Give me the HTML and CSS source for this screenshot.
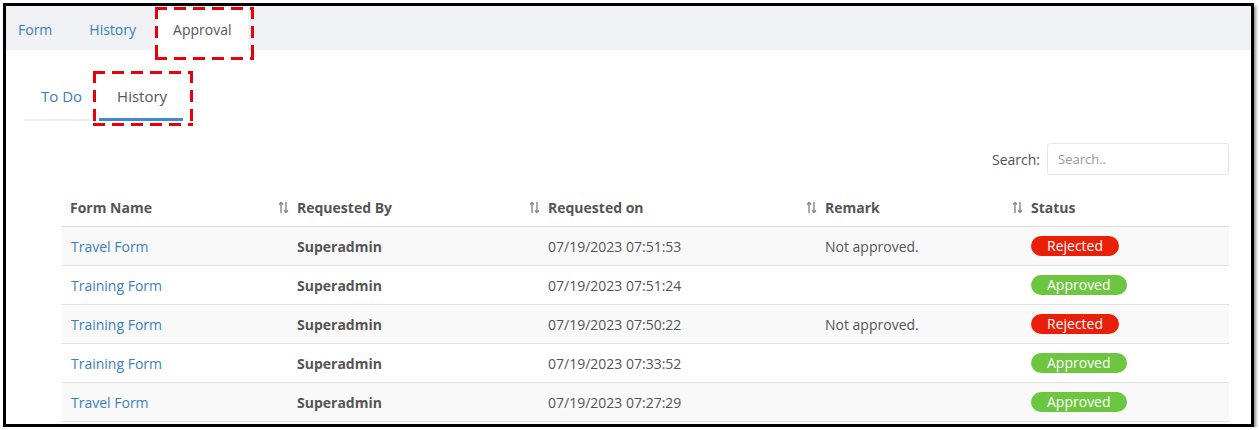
FILE: index.html
```html
<!DOCTYPE html>
<html>
<head>
<meta charset="utf-8">
<link rel="stylesheet" href="styles.css">
</head>
<body>
<div class="frame">
  <nav class="topnav">
    <a class="tab">Form</a>
    <a class="tab">History</a>
    <a class="tab active">Approval</a>
  </nav>
  <div class="content">
    <div class="subtabs">
      <a class="subtab">To Do</a>
      <a class="subtab active">History</a>
    </div>
    <div class="toolbar">
      <label class="search-label">Search:</label>
      <input class="search-input" type="text" placeholder="Search..">
    </div>
    <table class="grid">
      <thead>
        <tr>
          <th class="c1">Form Name</th>
          <th class="c2"><span class="sort"><svg width="11" height="13" viewBox="0 0 11 13"><path d="M3 1.5V12M1 3.5L3 1.5L5 3.5" fill="none" stroke="#888" stroke-width="1.4"/><path d="M8 1V11.5M6 9.5L8 11.5L10 9.5" fill="none" stroke="#888" stroke-width="1.4"/></svg></span>Requested By</th>
          <th class="c3"><span class="sort"><svg width="11" height="13" viewBox="0 0 11 13"><path d="M3 1.5V12M1 3.5L3 1.5L5 3.5" fill="none" stroke="#888" stroke-width="1.4"/><path d="M8 1V11.5M6 9.5L8 11.5L10 9.5" fill="none" stroke="#888" stroke-width="1.4"/></svg></span>Requested on</th>
          <th class="c4"><span class="sort"><svg width="11" height="13" viewBox="0 0 11 13"><path d="M3 1.5V12M1 3.5L3 1.5L5 3.5" fill="none" stroke="#888" stroke-width="1.4"/><path d="M8 1V11.5M6 9.5L8 11.5L10 9.5" fill="none" stroke="#888" stroke-width="1.4"/></svg></span>Remark</th>
          <th class="c5"><span class="sort"><svg width="11" height="13" viewBox="0 0 11 13"><path d="M3 1.5V12M1 3.5L3 1.5L5 3.5" fill="none" stroke="#888" stroke-width="1.4"/><path d="M8 1V11.5M6 9.5L8 11.5L10 9.5" fill="none" stroke="#888" stroke-width="1.4"/></svg></span>Status</th>
        </tr>
      </thead>
      <tbody>
        <tr>
          <td><a class="link">Travel Form</a></td>
          <td class="pad"><b>Superadmin</b></td>
          <td class="pad">07/19/2023 07:51:53</td>
          <td class="pad">Not approved.</td>
          <td class="pad"><span class="badge rejected">Rejected</span></td>
        </tr>
        <tr>
          <td><a class="link">Training Form</a></td>
          <td class="pad"><b>Superadmin</b></td>
          <td class="pad">07/19/2023 07:51:24</td>
          <td class="pad"></td>
          <td class="pad"><span class="badge approved">Approved</span></td>
        </tr>
        <tr>
          <td><a class="link">Training Form</a></td>
          <td class="pad"><b>Superadmin</b></td>
          <td class="pad">07/19/2023 07:50:22</td>
          <td class="pad">Not approved.</td>
          <td class="pad"><span class="badge rejected">Rejected</span></td>
        </tr>
        <tr>
          <td><a class="link">Training Form</a></td>
          <td class="pad"><b>Superadmin</b></td>
          <td class="pad">07/19/2023 07:33:52</td>
          <td class="pad"></td>
          <td class="pad"><span class="badge approved">Approved</span></td>
        </tr>
        <tr>
          <td><a class="link">Travel Form</a></td>
          <td class="pad"><b>Superadmin</b></td>
          <td class="pad">07/19/2023 07:27:29</td>
          <td class="pad"></td>
          <td class="pad"><span class="badge approved">Approved</span></td>
        </tr>
      </tbody>
    </table>
  </div>
  <div class="mark mark-top"></div>
  <div class="mark mark-sub"></div>
</div>
</body>
</html>
```

FILE: styles.css
```css
* { box-sizing: border-box; }
html, body {
  margin: 0;
  padding: 0;
  background: #ffffff;
}
body {
  font-family: "Open Sans", "Noto Sans", sans-serif;
  font-size: 14px;
  color: #555;
  overflow: hidden;
}
.frame {
  position: relative;
  margin: 3px 0 0 3px;
  width: 1251px;
  height: 424px;
  border: 3px solid #000;
  overflow: hidden;
  box-shadow: 2px 3px 3px rgba(0,0,0,0.45);
  background: #fff;
}
.topnav {
  display: flex;
  align-items: flex-end;
  height: 44px;
  background: #eff1f5;
  margin-left: -5px;
}
.tab {
  display: flex;
  align-items: center;
  height: 42px;
  padding: 0 17px 0;
  margin-right: 3px;
  color: #3a7fc0;
  cursor: pointer;
}
.tab.active {
  background: #fff;
  color: #555;
}
.content {
  padding: 24px 22px 0 18px;
}
.subtabs {
  display: flex;
}
.subtab {
  padding: 12px 17px 13px 17px;
  line-height: 20px;
  font-size: 15px;
  color: #3a7fc0;
  border-bottom: 2px solid #eeeeee;
}
.subtab.active {
  color: #555;
  border-bottom: 3px solid #3a8dd2;
  padding-bottom: 12px;
  padding-right: 16px;
  padding-left: 18px;
}
.toolbar {
  display: flex;
  justify-content: flex-end;
  align-items: center;
  gap: 7px;
  margin-top: 22px;
}
.search-label {
  color: #555;
}
.search-input {
  width: 182px;
  height: 32px;
  border: 1px solid #e4e6ea;
  border-radius: 3px;
  padding: 0 10px;
  font-family: inherit;
  font-size: 13px;
  color: #555;
  outline: none;
}
.search-input::placeholder {
  color: #999;
}
.grid {
  margin-left: 38px;
  margin-top: 15px;
  width: 1167px;
  border-collapse: collapse;
  table-layout: fixed;
}
.grid th {
  text-align: left;
  font-weight: 700;
  height: 36px;
  padding: 0 0 0 8px;
  color: #555;
  border-bottom: 1px solid #dcdcdc;
  white-space: nowrap;
}
.c1 { width: 208px; }
.c2 { width: 251px; }
.c3 { width: 277px; }
.c4 { width: 206px; }
.c5 { width: 225px; }
.sort {
  display: inline-block;
  width: 19px;
  vertical-align: -1px;
}
.sort svg { display: block; }
.grid td {
  height: 39px;
  padding: 1px 0 0 9px;
  border-bottom: 1px solid #e2e2e2;
  color: #555;
  white-space: nowrap;
}
.grid td.pad { padding-left: 27px; }
.grid tbody tr:nth-child(odd) td { background: #f9f9f9; }
.grid b { font-weight: 700; color: #555; }
.link { color: #3a7fc0; }
.badge {
  display: inline-block;
  height: 20px;
  line-height: 20px;
  padding: 0 16px;
  border-radius: 10px;
  color: #fff;
  font-size: 14px;
}
.rejected { background: #ea1f08; }
.approved { background: #6cc63f; }
.mark {
  position: absolute;
  background:
    repeating-linear-gradient(90deg, #e8000b 0 12px, transparent 12px 19px) left top / 100% 3px no-repeat,
    repeating-linear-gradient(90deg, #e8000b 0 12px, transparent 12px 19px) left bottom / 100% 3px no-repeat,
    repeating-linear-gradient(180deg, #e8000b 0 12px, transparent 12px 19px) left top / 3px 100% no-repeat,
    repeating-linear-gradient(180deg, #e8000b 0 12px, transparent 12px 19px) right top / 3px 100% no-repeat;
}
.mark-top {
  left: 149px;
  top: 1px;
  width: 99px;
  height: 53px;
}
.mark-sub {
  left: 87px;
  top: 65px;
  width: 100px;
  height: 55px;
}
```
